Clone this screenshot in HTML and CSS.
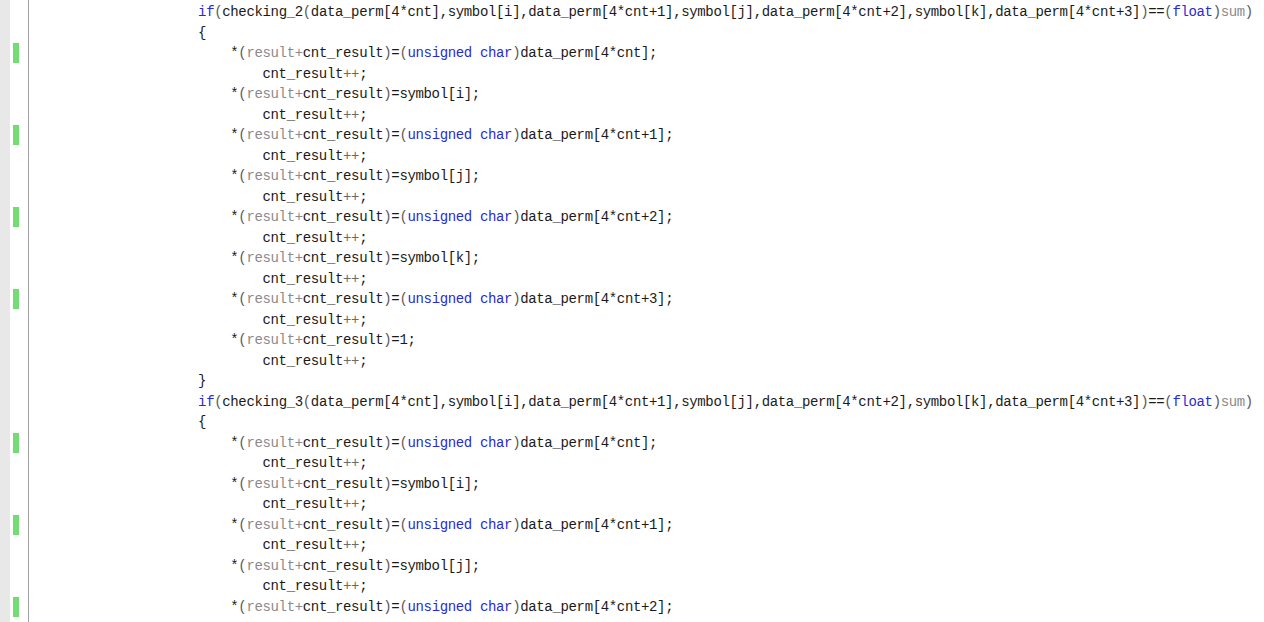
FILE: index.html
```html
<!DOCTYPE html>
<html>
<head>
    <title>Editor</title>
    <link rel="stylesheet" href="styles.css">
</head>
<body>
    <div class="editor">
        <div class="line"><span class="gutter"></span><span class="code">                     <span class="kw">if</span><span class="pn">(</span>checking_2<span class="pn">(</span>data_perm[4*cnt],symbol[i],data_perm[4*cnt+1],symbol[j],data_perm[4*cnt+2],symbol[k],data_perm[4*cnt+3]<span class="pn">)</span>==<span class="pn">(</span><span class="kw">float</span><span class="pn">)</span><span class="gr">sum</span><span class="pn">)</span></span></div>
        <div class="line"><span class="gutter"></span><span class="code">                     {</span></div>
        <div class="line"><span class="gutter"><i class="mark"></i></span><span class="code">                         *<span class="pn">(</span><span class="gr">result+</span>cnt_result<span class="pn">)</span>=<span class="pn">(</span><span class="kw">unsigned char</span><span class="pn">)</span>data_perm[4*cnt];</span></div>
        <div class="line"><span class="gutter"></span><span class="code">                             cnt_result<span class="op">++</span>;</span></div>
        <div class="line"><span class="gutter"></span><span class="code">                         *<span class="pn">(</span><span class="gr">result+</span>cnt_result<span class="pn">)</span>=symbol[i];</span></div>
        <div class="line"><span class="gutter"></span><span class="code">                             cnt_result<span class="op">++</span>;</span></div>
        <div class="line"><span class="gutter"><i class="mark"></i></span><span class="code">                         *<span class="pn">(</span><span class="gr">result+</span>cnt_result<span class="pn">)</span>=<span class="pn">(</span><span class="kw">unsigned char</span><span class="pn">)</span>data_perm[4*cnt+1];</span></div>
        <div class="line"><span class="gutter"></span><span class="code">                             cnt_result<span class="op">++</span>;</span></div>
        <div class="line"><span class="gutter"></span><span class="code">                         *<span class="pn">(</span><span class="gr">result+</span>cnt_result<span class="pn">)</span>=symbol[j];</span></div>
        <div class="line"><span class="gutter"></span><span class="code">                             cnt_result<span class="op">++</span>;</span></div>
        <div class="line"><span class="gutter"><i class="mark"></i></span><span class="code">                         *<span class="pn">(</span><span class="gr">result+</span>cnt_result<span class="pn">)</span>=<span class="pn">(</span><span class="kw">unsigned char</span><span class="pn">)</span>data_perm[4*cnt+2];</span></div>
        <div class="line"><span class="gutter"></span><span class="code">                             cnt_result<span class="op">++</span>;</span></div>
        <div class="line"><span class="gutter"></span><span class="code">                         *<span class="pn">(</span><span class="gr">result+</span>cnt_result<span class="pn">)</span>=symbol[k];</span></div>
        <div class="line"><span class="gutter"></span><span class="code">                             cnt_result<span class="op">++</span>;</span></div>
        <div class="line"><span class="gutter"><i class="mark"></i></span><span class="code">                         *<span class="pn">(</span><span class="gr">result+</span>cnt_result<span class="pn">)</span>=<span class="pn">(</span><span class="kw">unsigned char</span><span class="pn">)</span>data_perm[4*cnt+3];</span></div>
        <div class="line"><span class="gutter"></span><span class="code">                             cnt_result<span class="op">++</span>;</span></div>
        <div class="line"><span class="gutter"></span><span class="code">                         *<span class="pn">(</span><span class="gr">result+</span>cnt_result<span class="pn">)</span>=1;</span></div>
        <div class="line"><span class="gutter"></span><span class="code">                             cnt_result<span class="op">++</span>;</span></div>
        <div class="line"><span class="gutter"></span><span class="code">                     }</span></div>
        <div class="line"><span class="gutter"></span><span class="code">                     <span class="kw">if</span><span class="pn">(</span>checking_3<span class="pn">(</span>data_perm[4*cnt],symbol[i],data_perm[4*cnt+1],symbol[j],data_perm[4*cnt+2],symbol[k],data_perm[4*cnt+3]<span class="pn">)</span>==<span class="pn">(</span><span class="kw">float</span><span class="pn">)</span><span class="gr">sum</span><span class="pn">)</span></span></div>
        <div class="line"><span class="gutter"></span><span class="code">                     {</span></div>
        <div class="line"><span class="gutter"><i class="mark"></i></span><span class="code">                         *<span class="pn">(</span><span class="gr">result+</span>cnt_result<span class="pn">)</span>=<span class="pn">(</span><span class="kw">unsigned char</span><span class="pn">)</span>data_perm[4*cnt];</span></div>
        <div class="line"><span class="gutter"></span><span class="code">                             cnt_result<span class="op">++</span>;</span></div>
        <div class="line"><span class="gutter"></span><span class="code">                         *<span class="pn">(</span><span class="gr">result+</span>cnt_result<span class="pn">)</span>=symbol[i];</span></div>
        <div class="line"><span class="gutter"></span><span class="code">                             cnt_result<span class="op">++</span>;</span></div>
        <div class="line"><span class="gutter"><i class="mark"></i></span><span class="code">                         *<span class="pn">(</span><span class="gr">result+</span>cnt_result<span class="pn">)</span>=<span class="pn">(</span><span class="kw">unsigned char</span><span class="pn">)</span>data_perm[4*cnt+1];</span></div>
        <div class="line"><span class="gutter"></span><span class="code">                             cnt_result<span class="op">++</span>;</span></div>
        <div class="line"><span class="gutter"></span><span class="code">                         *<span class="pn">(</span><span class="gr">result+</span>cnt_result<span class="pn">)</span>=symbol[j];</span></div>
        <div class="line"><span class="gutter"></span><span class="code">                             cnt_result<span class="op">++</span>;</span></div>
        <div class="line"><span class="gutter"><i class="mark"></i></span><span class="code">                         *<span class="pn">(</span><span class="gr">result+</span>cnt_result<span class="pn">)</span>=<span class="pn">(</span><span class="kw">unsigned char</span><span class="pn">)</span>data_perm[4*cnt+2];</span></div>
    </div>
</body>
</html>
```

FILE: styles.css
```css
html, body {
    margin: 0;
    height: 100%;
    overflow: hidden;
}

body {
    background: linear-gradient(to right, #e8e8e8 0, #e8e8e8 10px, #ffffff 10px, #ffffff 28px, #a0a0a0 28px, #a0a0a0 29px, #ffffff 29px);
}

.editor {
    padding-top: 2px;
    font-family: "Liberation Mono", monospace;
    font-size: 14px;
    letter-spacing: -0.35px;
    color: #1a1a1a;
}

.line {
    display: flex;
    height: 20.5px;
    line-height: 20.5px;
}

.gutter {
    width: 29px;
    flex-shrink: 0;
    display: flex;
}

.mark {
    width: 6px;
    height: 20px;
    margin-left: 13px;
    background-color: #74dc74;
}

.code {
    white-space: pre;
}

.kw {
    color: #2a2ad2;
}

.gr {
    color: #8a8a8a;
}

.pn {
    color: #5a5a5a;
}

.op {
    color: #6a6a6a;
}
```
